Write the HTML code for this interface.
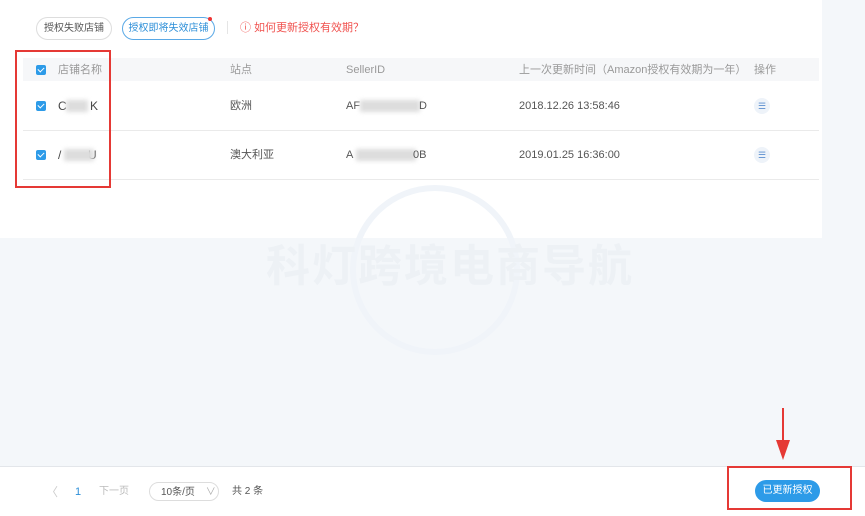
<!DOCTYPE html><html><head><meta charset="utf-8"><style>
body{margin:0;width:865px;height:515px;background:#f4f7fa;font-family:"Liberation Sans","Noto Sans CJK SC",sans-serif;position:relative;overflow:hidden;font-size:11px;color:#555}
.a{position:absolute;line-height:14px;white-space:nowrap}
.panel{left:0;top:0;width:822px;height:238px;background:#fff}
.btn{top:17px;height:21px;border:1px solid #ddd;border-radius:12px;line-height:21px;text-align:center;font-size:10px;color:#555}
.cb{width:10px;height:10px;background:#2d9be8;border-radius:2px}
.cb:after{content:"";position:absolute;left:3px;top:1px;width:3px;height:5px;border:solid #fff;border-width:0 1.5px 1.5px 0;transform:rotate(45deg)}
.ic{width:16px;height:16px;border-radius:50%;background:#eef3f9;color:#5b8fd0;font-size:9px;text-align:center;line-height:16px}
.blur{background:#ddd;filter:blur(2px);height:12px}
</style></head><body>
<div class="a panel"></div>
<div class="a" style="left:350px;top:185px;width:170px;height:170px;border-radius:50%;border:6px solid #f0f4f9;box-sizing:border-box"></div>
<div class="a" style="left:266px;top:242px;font-size:44px;line-height:50px;font-weight:bold;color:#edf1f5;letter-spacing:2px">科灯跨境电商导航</div>
<div class="a btn" style="left:36px;width:74px;line-height:21px">授权失败店铺</div>
<div class="a btn" style="left:122px;width:91px;border-color:#5aa9e6;color:#2d8fd8;line-height:21px">授权即将失效店铺</div>
<div class="a" style="left:208px;top:17px;width:4px;height:4px;border-radius:50%;background:#e33"></div>
<div class="a" style="left:227px;top:21px;width:1px;height:13px;background:#e5e5e5"></div>
<div class="a" style="left:240px;top:21px;color:#f0524f;font-size:11px">ⓘ 如何更新授权有效期？</div>
<div class="a" style="left:23px;top:58px;width:796px;height:23px;background:#f6f7f9"></div>
<div class="a" style="left:23px;top:130px;width:796px;height:1px;background:#eaeaea"></div>
<div class="a" style="left:23px;top:179px;width:796px;height:1px;background:#eaeaea"></div>
<div class="a cb" style="left:36px;top:65px"></div>
<div class="a cb" style="left:36px;top:101px"></div>
<div class="a cb" style="left:36px;top:150px"></div>
<div class="a" style="left:58px;top:63px;color:#999">店铺名称</div>
<div class="a" style="left:230px;top:63px;color:#999">站点</div>
<div class="a" style="left:346px;top:63px;color:#999">SellerID</div>
<div class="a" style="left:519px;top:63px;color:#999">上一次更新时间（Amazon授权有效期为一年）</div>
<div class="a" style="left:754px;top:63px;color:#999">操作</div>
<div class="a" style="left:58px;top:99px;font-size:12px;color:#444">C&nbsp;&nbsp;&nbsp;&nbsp;&nbsp;&nbsp;&nbsp;K</div>
<div class="a blur" style="left:66px;top:100px;width:22px"></div>
<div class="a" style="left:58px;top:148px;font-size:12px;color:#444">/&nbsp;&nbsp;&nbsp;&nbsp;&nbsp;&nbsp;&nbsp;&nbsp;U</div>
<div class="a blur" style="left:64px;top:149px;width:30px"></div>
<div class="a" style="left:230px;top:99px">欧洲</div>
<div class="a" style="left:230px;top:148px">澳大利亚</div>
<div class="a" style="left:346px;top:99px">AF</div><div class="a blur" style="left:360px;top:100px;width:60px"></div><div class="a" style="left:419px;top:99px">D</div>
<div class="a" style="left:346px;top:148px">A</div><div class="a blur" style="left:356px;top:149px;width:60px"></div><div class="a" style="left:413px;top:148px">0B</div>
<div class="a" style="left:519px;top:99px">2018.12.26 13:58:46</div>
<div class="a" style="left:519px;top:148px">2019.01.25 16:36:00</div>
<div class="a ic" style="left:754px;top:98px;line-height:16px">☰</div>
<div class="a ic" style="left:754px;top:147px;line-height:16px">☰</div>
<div class="a" style="left:15px;top:50px;width:92px;height:134px;border:2px solid #e53935"></div>
<div class="a" style="left:0;top:466px;width:865px;height:49px;background:#fff;border-top:1px solid #e3e6ea"></div>
<div class="a" style="left:46px;top:485px;color:#ccc;font-size:12px">〈</div>
<div class="a" style="left:75px;top:485px;color:#2d8fd8">1</div>
<div class="a" style="left:99px;top:485px;color:#bbb;font-size:10px">下一页</div>
<div class="a" style="left:149px;top:482px;width:70px;height:19px;border:1px solid #ddd;border-radius:10px;font-size:10px;line-height:19px;padding-left:11px;box-sizing:border-box">10条/页 <span style="color:#aaa;margin-left:8px">∨</span></div>
<div class="a" style="left:232px;top:485px;font-size:10px">共 2 条</div>
<div class="a" style="left:755px;top:480px;width:65px;height:22px;border-radius:11px;background:#2d9be8;color:#fff;font-size:10px;text-align:center;line-height:22px">已更新授权</div>
<div class="a" style="left:727px;top:466px;width:121px;height:40px;border:2px solid #e53935"></div>
<div class="a" style="left:782px;top:408px;width:2px;height:40px;background:#e53935"></div>
<div class="a" style="left:776px;top:440px;width:0;height:0;border-left:7px solid transparent;border-right:7px solid transparent;border-top:20px solid #e53935"></div>
</body></html>
